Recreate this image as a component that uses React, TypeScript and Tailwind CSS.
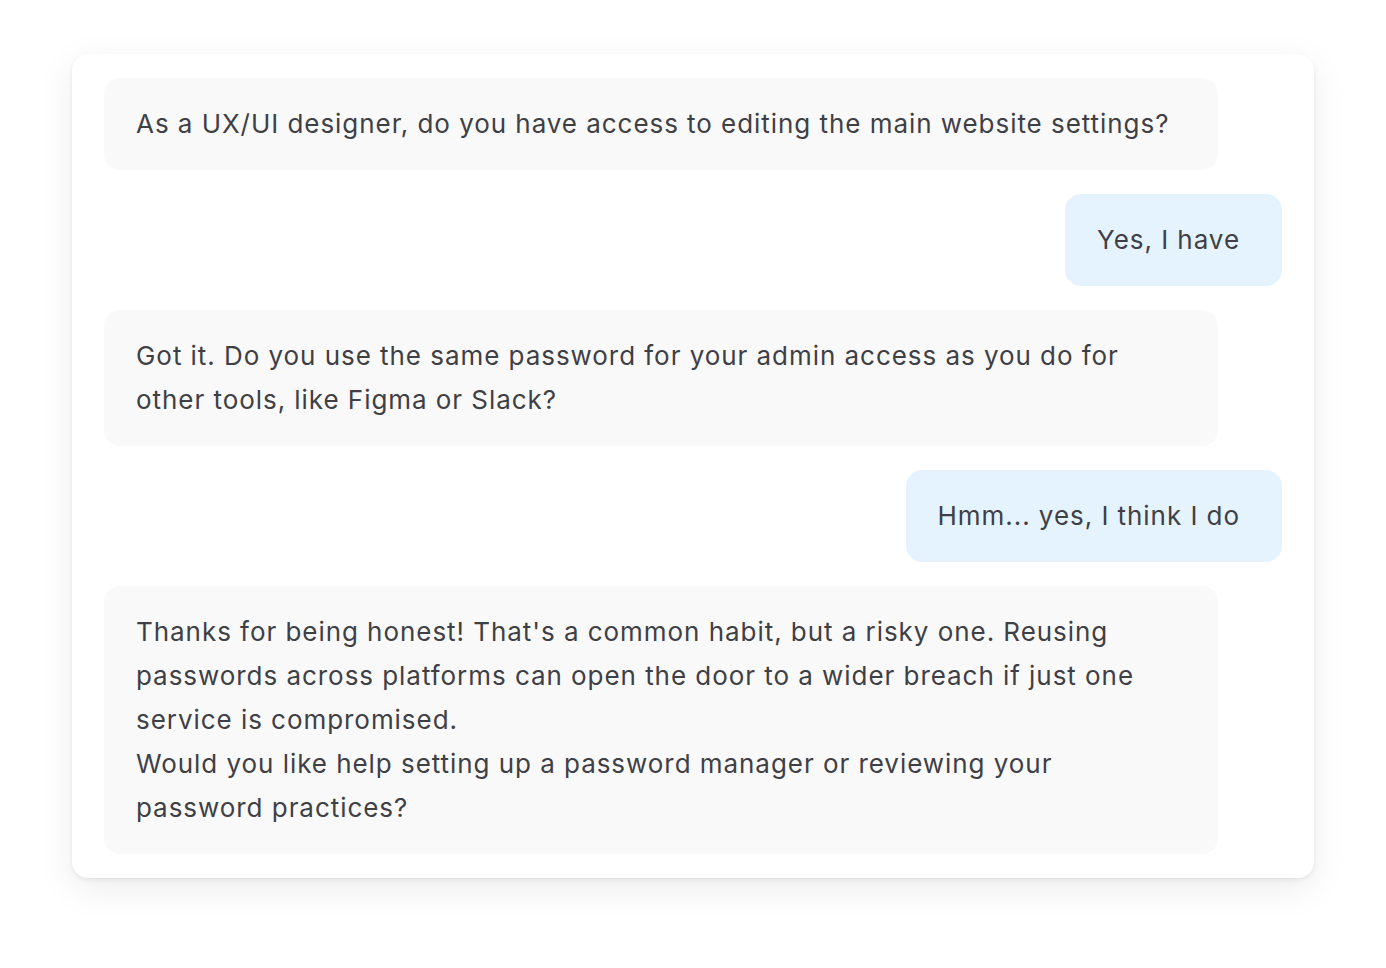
const messages = [
  { from: "bot", lines: ["As a UX/UI designer, do you have access to editing the main website settings?"] },
  { from: "user", lines: ["Yes, I have"] },
  {
    from: "bot",
    lines: ["Got it. Do you use the same password for your admin access as you do for other tools, like Figma or Slack?"],
  },
  { from: "user", lines: ["Hmm... yes, I think I do"] },
  {
    from: "bot",
    lines: [
      "Thanks for being honest! That's a common habit, but a risky one. Reusing passwords across platforms can open the door to a wider breach if just one service is compromised.",
      "Would you like help setting up a password manager or reviewing your password practices?",
    ],
  },
];

export default function App() {
  return (
    <div className="min-h-screen bg-white px-[72px] pt-[54px] font-['Inter',sans-serif]">
      <div className="w-[1242px] rounded-2xl bg-white px-8 py-6 shadow-[0_2px_4px_rgba(0,0,0,0.07),0_10px_36px_rgba(0,0,0,0.08)]">
        <div className="flex flex-col gap-6">
          {messages.map((m, i) =>
            m.from === "bot" ? (
              <div
                key={i}
                className="w-[1114px] rounded-2xl bg-[#f9f9f9] py-6 pl-8 pr-[43px] text-[26px] leading-[44px] tracking-[0.95px] text-[#3f3f46]"
              >
                {m.lines.map((l, j) => (
                  <p key={j}>{l}</p>
                ))}
              </div>
            ) : (
              <div key={i} className="flex justify-end">
                <div className="rounded-2xl bg-[#e5f3fe] py-6 pl-8 pr-[42px] text-[26px] leading-[44px] tracking-[0.95px] text-[#3f3f46]">
                  {m.lines[0]}
                </div>
              </div>
            )
          )}
        </div>
      </div>
    </div>
  );
}
